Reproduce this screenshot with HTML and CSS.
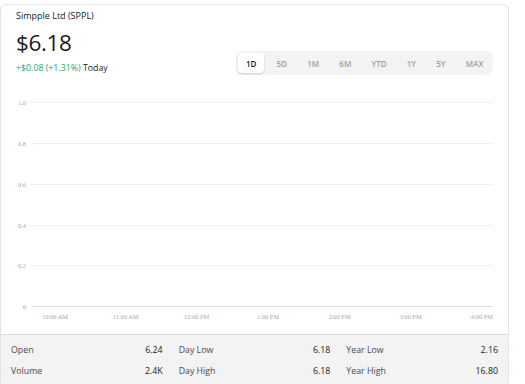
FILE: index.html
```html
<!DOCTYPE html>
<html lang="en">
<head>
  <meta charset="UTF-8">
  <title>Simpple Ltd (SPPL)</title>
  <link rel="stylesheet" href="styles.css">
</head>
<body>
<div class="card">
  <div class="quote-head">
    <div class="quote-info">
      <div class="ticker">Simpple Ltd (SPPL)</div>
      <div class="price">$6.18</div>
      <div class="change"><span class="up">+$0.08 (+1.31%)</span> Today</div>
    </div>
    <div class="ranges">
      <button class="range active">1D</button>
      <button class="range">5D</button>
      <button class="range">1M</button>
      <button class="range">6M</button>
      <button class="range">YTD</button>
      <button class="range">1Y</button>
      <button class="range">5Y</button>
      <button class="range">MAX</button>
    </div>
  </div>

  <svg class="chart" width="507" height="260" viewBox="0 74 507 260">
    <g class="grid">
      <line x1="30" y1="102.5" x2="492" y2="102.5" />
      <line x1="30" y1="143.5" x2="492" y2="143.5" />
      <line x1="30" y1="184.5" x2="492" y2="184.5" />
      <line x1="30" y1="225.5" x2="492" y2="225.5" />
      <line x1="30" y1="265.5" x2="492" y2="265.5" />
      <line class="base" x1="31" y1="306.5" x2="492" y2="306.5" />
    </g>
    <g class="y-labels">
      <text x="25" y="104.5">1.0</text>
      <text x="25" y="145.5">0.8</text>
      <text x="25" y="186.5">0.6</text>
      <text x="25" y="227.5">0.4</text>
      <text x="25" y="267.5">0.2</text>
      <text x="25" y="308.5">0</text>
    </g>
    <g class="x-labels">
      <text x="54" y="318.5">10:00 AM</text>
      <text x="124.5" y="318.5">11:00 AM</text>
      <text x="195.5" y="318.5">12:00 PM</text>
      <text x="267" y="318.5">1:00 PM</text>
      <text x="338.5" y="318.5">2:00 PM</text>
      <text x="409.5" y="318.5">3:00 PM</text>
      <text class="last" x="492" y="318.5">4:00 PM</text>
    </g>
  </svg>

  <div class="stats">
    <div class="stat"><span class="label">Open</span><span class="value">6.24</span></div>
    <div class="stat"><span class="label">Day Low</span><span class="value">6.18</span></div>
    <div class="stat"><span class="label">Year Low</span><span class="value">2.16</span></div>
    <div class="stat"><span class="label">Volume</span><span class="value">2.4K</span></div>
    <div class="stat"><span class="label">Day High</span><span class="value">6.18</span></div>
    <div class="stat"><span class="label">Year High</span><span class="value">16.80</span></div>
  </div>
</div>
</body>
</html>
```

FILE: styles.css
```css
* { box-sizing: border-box; }
html, body {
  margin: 0;
  height: 100%;
  background: white;
  font-family: 'Open Sans', 'Noto Sans', sans-serif;
  overflow: hidden;
}

body {
  padding-top: 4px;
}

.card {
  width: 509px;
  border: 1px solid #e4e4e4;
  border-bottom: none;
  border-radius: 6px 6px 0 0;
  background: white;
  color: #1b1b1b;
}

.quote-head {
  display: flex;
  justify-content: space-between;
  align-items: flex-start;
  padding: 5px 15px 0 15px;
  height: 69px;
}

.ticker {
  font-size: 9px;
  line-height: 12px;
}

.price {
  margin-top: 7px;
  font-size: 22.5px;
  line-height: 28px;
  font-weight: 500;
  letter-spacing: -0.4px;
}

.change {
  margin-top: 5px;
  font-size: 8.8px;
  line-height: 12px;
}

.change .up {
  color: #1ea672;
}

.ranges {
  display: flex;
  gap: 5px;
  margin-top: 41px;
  padding: 2px;
  background: #f3f3f3;
  border-radius: 6px;
}

.range {
  font-family: inherit;
  font-size: 8px;
  font-weight: 600;
  color: #a0a0a0;
  background: transparent;
  border: none;
  border-radius: 4px;
  height: 20px;
  padding: 0 7.6px;
  cursor: pointer;
}

.range.active {
  background: white;
  color: #1b1b1b;
  box-shadow: 0 1px 2px rgba(0, 0, 0, 0.15);
}

.chart {
  display: block;
}

.grid line {
  stroke: #f0f0f0;
  stroke-width: 1;
}

.grid line.base {
  stroke: #dedede;
}

.chart text {
  font-family: 'Liberation Serif', 'DejaVu Serif', serif;
  font-size: 6.4px;
  fill: #a8a8a8;
}

.y-labels text {
  text-anchor: end;
}

.x-labels text {
  text-anchor: middle;
}

.x-labels text.last {
  text-anchor: end;
}

.stats {
  display: grid;
  grid-template-columns: repeat(3, 1fr);
  column-gap: 16px;
  padding: 5px 10px 2px 10px;
  background: #f3f3f3;
  border-top: 1px solid #dcdcdc;
  font-size: 8.8px;
}

.stat {
  display: flex;
  justify-content: space-between;
  line-height: 21px;
}

.stat .label {
  color: #4a4a4a;
}

.stat .value {
  color: #1b1b1b;
}
```
